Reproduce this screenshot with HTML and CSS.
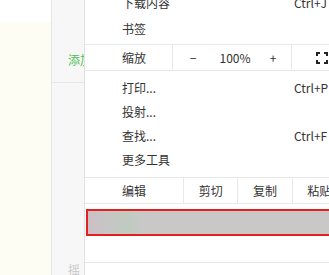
FILE: index.html
```html
<!DOCTYPE html>
<html lang="zh-CN">
<head>
<meta charset="UTF-8">
<title>菜单</title>
<link rel="stylesheet" href="styles.css">
</head>
<body>
<div class="page">
  <div class="left-area">
    <div class="left-top"></div>
    <div class="left-body"></div>
  </div>
  <div class="side-panel">
    <div class="side-block"></div>
    <div class="side-row"><span class="side-link">添加</span></div>
    <div class="side-fill"></div>
    <div class="side-foot">摇</div>
  </div>

  <div class="menu">
    <div class="menu-item first"><span>下载内容</span><span class="key">Ctrl+J</span></div>
    <div class="menu-item bookmarks"><span>书签</span><span class="key"></span></div>
    <div class="menu-row zoom-row">
      <div class="row-label">缩放</div>
      <div class="zoom-ctrl">
        <span class="zoom-btn">−</span>
        <span class="zoom-val">100%</span>
        <span class="zoom-btn">+</span>
      </div>
      <div class="full-cell">
        <svg width="12" height="12" viewBox="0 0 12 12">
          <path d="M1 4V1h3M8 1h3v3M11 8v3H8M4 11H1V8" fill="none" stroke="#222" stroke-width="2"/>
        </svg>
      </div>
    </div>
    <div class="menu-group">
      <div class="menu-item"><span>打印...</span><span class="key">Ctrl+P</span></div>
      <div class="menu-item"><span>投射...</span><span class="key"></span></div>
      <div class="menu-item"><span>查找...</span><span class="key">Ctrl+F</span></div>
      <div class="menu-item"><span>更多工具</span><span class="key"></span></div>
    </div>
    <div class="menu-row edit-row">
      <div class="row-label">编辑</div>
      <div class="edit-cell">剪切</div>
      <div class="edit-cell">复制</div>
      <div class="edit-cell">粘贴</div>
    </div>
    <div class="highlight"></div>
    <div class="menu-bottom"></div>
  </div>
</div>
</body>
</html>
```

FILE: styles.css
```css
* {
  box-sizing: border-box;
  margin: 0;
  padding: 0;
}

body {
  font-family: "Noto Sans CJK SC", "Liberation Sans", sans-serif;
  font-size: 12px;
  color: #333;
  background: #fff;
  overflow: hidden;
}

.page {
  position: relative;
  display: flex;
  width: 329px;
  height: 275px;
  overflow: hidden;
}

/* zona izquierda */
.left-area {
  width: 51px;
  display: flex;
  flex-direction: column;
}

.left-top {
  height: 22px;
  background: #fff;
}

.left-body {
  flex: 1;
  background: #fdfdf4;
}

.side-panel {
  width: 34px;
  background: #f7f7f7;
  border-left: 1px solid #e6e6e6;
  border-right: 1px solid #e3e3e3;
  display: flex;
  flex-direction: column;
}

.side-block {
  height: 44px;
}

.side-row {
  height: 39px;
  border-bottom: 1px solid #e6e6e6;
  padding-left: 16px;
  padding-top: 7px;
}

.side-link {
  color: #4fbf4f;
  white-space: nowrap;
}

.side-fill {
  flex: 1;
}

.side-foot {
  height: 14px;
  padding-left: 16px;
  color: #c8c8c8;
}

/* menu desplegable */
.menu {
  position: absolute;
  left: 84px;
  top: -10px;
  width: 262px;
  height: 300px;
  background: #fff;
  border-left: 1px solid #e2e2e2;
}

.menu-item {
  display: grid;
  grid-template-columns: 1fr 52px;
  height: 24px;
  align-items: center;
  padding-left: 37px;
  white-space: nowrap;
}

.menu-item.first {
  margin-bottom: 2px;
}

.menu-item.bookmarks {
  margin-bottom: 4px;
}

.key {
  overflow: hidden;
}

.menu-row {
  display: flex;
  height: 27px;
  border-top: 1px solid #e8e8e8;
  border-bottom: 1px solid #e8e8e8;
  align-items: stretch;
}

.row-label {
  display: flex;
  align-items: center;
  padding-left: 37px;
}

.zoom-row .row-label {
  width: 87px;
}

.zoom-ctrl {
  width: 120px;
  display: flex;
  align-items: center;
  border-left: 1px solid #e8e8e8;
  border-right: 1px solid #e8e8e8;
  padding-left: 14px;
}

.zoom-btn {
  width: 12px;
  text-align: center;
}

.zoom-val {
  width: 68px;
  text-align: center;
  padding-left: 4px;
}

.full-cell {
  flex: 1;
  display: flex;
  align-items: center;
  padding-left: 24px;
}

.menu-group {
  padding: 4px 0 6px;
}

.edit-row .row-label {
  width: 101px;
}

.edit-cell {
  width: 57px;
  display: flex;
  align-items: center;
  justify-content: center;
  border-left: 1px solid #e8e8e8;
}

.highlight {
  margin-top: 5px;
  margin-left: 1px;
  height: 27px;
  border: 2px solid #e51e1e;
  border-right: none;
  background: linear-gradient(90deg, #cbbfc6 0px, #c6c6c6 20px, #bfcbbf 40px, #c8c8c8 55px, #c8c8c8 100%);
}

.menu-bottom {
  margin-top: 26px;
  border-top: 1px solid #e8e8e8;
}
```
